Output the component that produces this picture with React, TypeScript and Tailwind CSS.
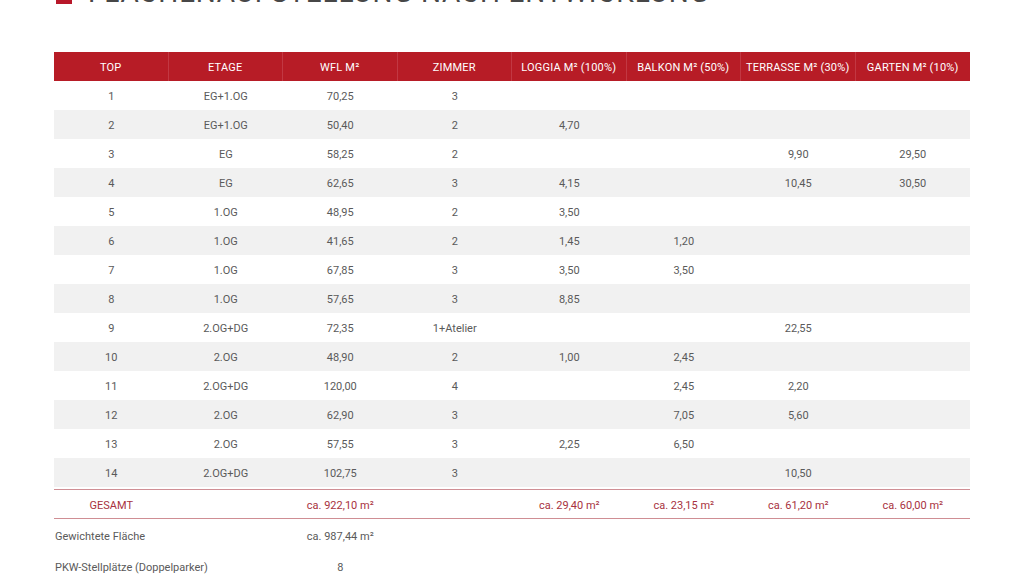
import React from "react";

const headers = [
  "TOP",
  "ETAGE",
  "WFL M²",
  "ZIMMER",
  "LOGGIA M² (100%)",
  "BALKON M² (50%)",
  "TERRASSE M² (30%)",
  "GARTEN M² (10%)",
];

const rows: string[][] = [
  ["1", "EG+1.OG", "70,25", "3", "", "", "", ""],
  ["2", "EG+1.OG", "50,40", "2", "4,70", "", "", ""],
  ["3", "EG", "58,25", "2", "", "", "9,90", "29,50"],
  ["4", "EG", "62,65", "3", "4,15", "", "10,45", "30,50"],
  ["5", "1.OG", "48,95", "2", "3,50", "", "", ""],
  ["6", "1.OG", "41,65", "2", "1,45", "1,20", "", ""],
  ["7", "1.OG", "67,85", "3", "3,50", "3,50", "", ""],
  ["8", "1.OG", "57,65", "3", "8,85", "", "", ""],
  ["9", "2.OG+DG", "72,35", "1+Atelier", "", "", "22,55", ""],
  ["10", "2.OG", "48,90", "2", "1,00", "2,45", "", ""],
  ["11", "2.OG+DG", "120,00", "4", "", "2,45", "2,20", ""],
  ["12", "2.OG", "62,90", "3", "", "7,05", "5,60", ""],
  ["13", "2.OG", "57,55", "3", "2,25", "6,50", "", ""],
  ["14", "2.OG+DG", "102,75", "3", "", "", "10,50", ""],
];

const totals = [
  "GESAMT",
  "",
  "ca. 922,10 m²",
  "",
  "ca. 29,40 m²",
  "ca. 23,15 m²",
  "ca. 61,20 m²",
  "ca. 60,00 m²",
];

const App = () => {
  return (
    <div
      className="w-[1024px] h-[576px] overflow-hidden bg-white text-[#5a5a5a]"
      style={{ fontFamily: "Roboto, 'Liberation Sans', sans-serif" }}
    >
      <div className="flex items-end gap-4 pl-[56px] h-[30px] -mt-[22px]">
        <div className="w-[16px] h-[16px] bg-[#b8182a] mb-[4px] shrink-0" />
        <h1 className="text-[28px] leading-[30px] tracking-[0.8px] text-[#474747] font-normal whitespace-nowrap">
          FLÄCHENAUFSTELLUNG NACH ENTWICKLUNG
        </h1>
      </div>

      <div className="ml-[54px] mt-[44px] w-[916px] text-[11px]">
        <div className="grid grid-cols-8 h-[29px] bg-[#b71c26] text-white">
          {headers.map((h, i) => (
            <div
              key={i}
              className={`flex items-center justify-center pt-[3px] tracking-[0.2px] ${
                i < 7 ? "border-r border-[#c23843]" : ""
              }`}
            >
              {h}
            </div>
          ))}
        </div>

        {rows.map((r, i) => (
          <div
            key={i}
            className={`grid grid-cols-8 h-[29px] ${
              i % 2 === 1 ? "bg-[#f1f1f1]" : "bg-white"
            }`}
          >
            {r.map((c, j) => (
              <div key={j} className="flex items-center justify-center pt-[4px]">
                {c}
              </div>
            ))}
          </div>
        ))}

        <div className="grid grid-cols-8 h-[30px] mt-[2px] border-y border-[#cf8e94] text-[#a8323e]">
          {totals.map((c, j) => (
            <div key={j} className="flex items-center justify-center pt-[4px]">
              {c}
            </div>
          ))}
        </div>

        <div className="grid grid-cols-8 h-[31px] mt-[1px]">
          <div className="col-span-2 flex items-center pl-[1px] pt-[4px]">
            Gewichtete Fläche
          </div>
          <div className="flex items-center justify-center pt-[4px]">
            ca. 987,44 m²
          </div>
        </div>
        <div className="grid grid-cols-8 h-[30px]">
          <div className="col-span-2 flex items-center pl-[1px] pt-[4px] whitespace-nowrap">
            PKW-Stellplätze (Doppelparker)
          </div>
          <div className="flex items-center justify-center pt-[4px]">8</div>
        </div>
      </div>
    </div>
  );
};

export default App;
